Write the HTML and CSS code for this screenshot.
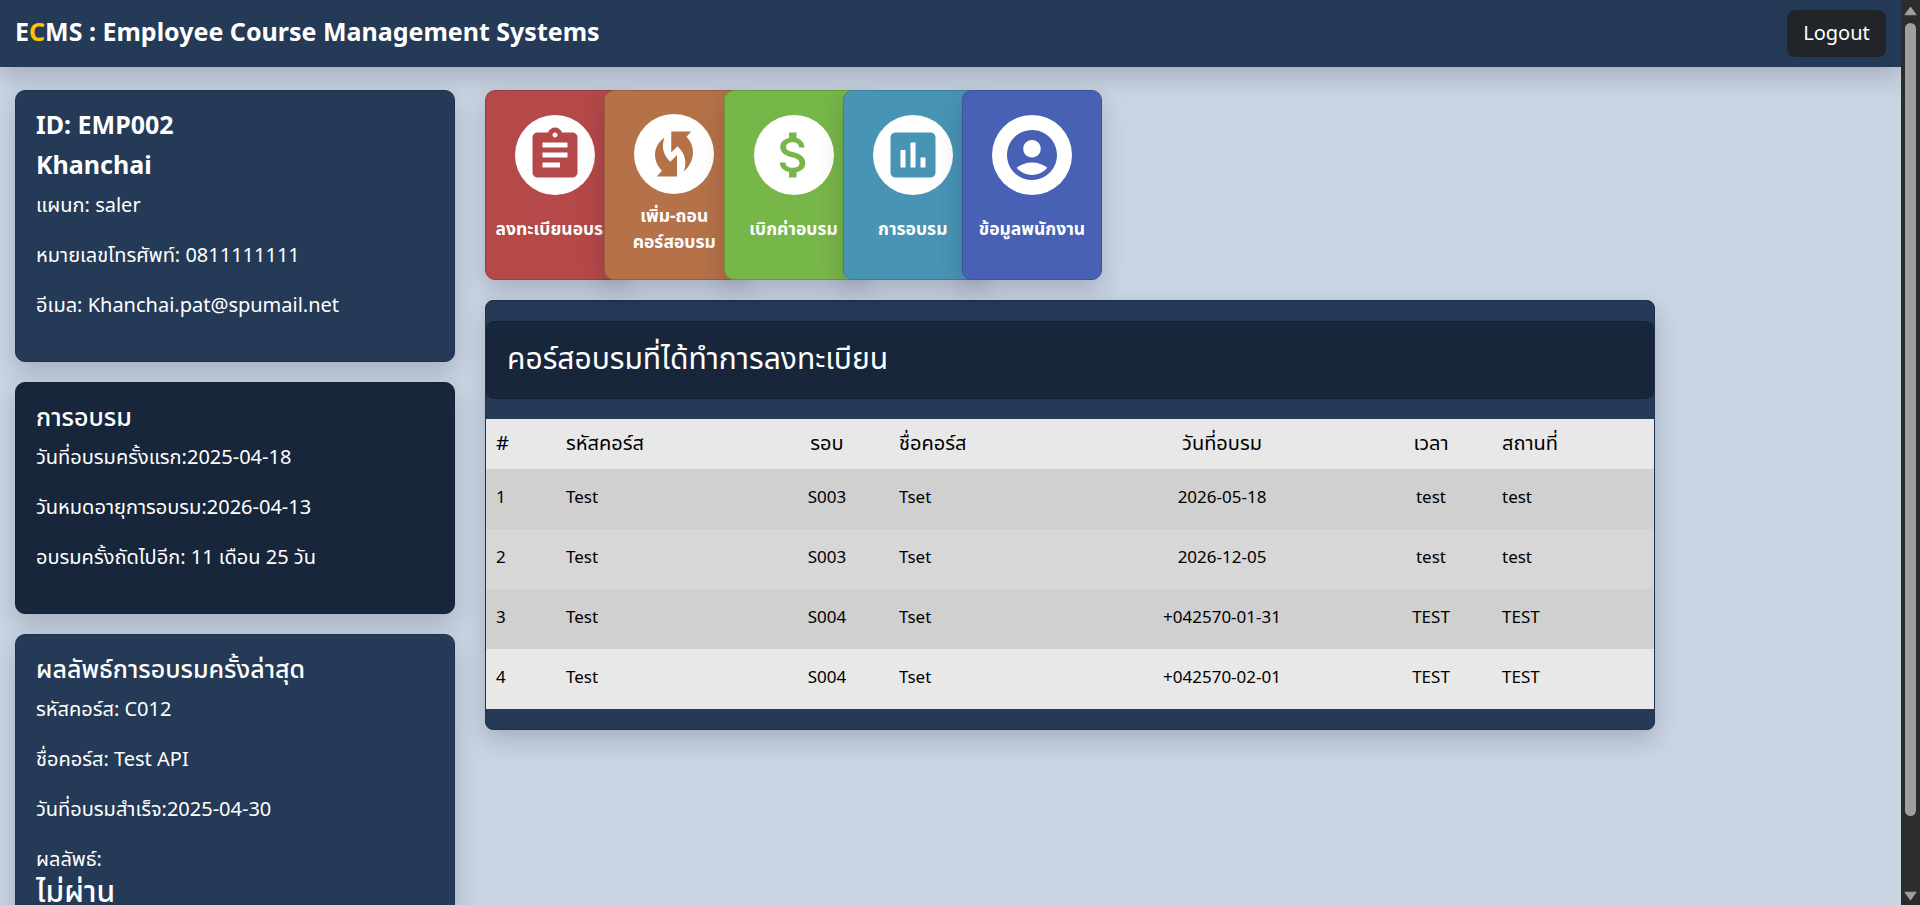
FILE: index.html
```html
<!DOCTYPE html>
<html lang="th">
<head>
<meta charset="utf-8">
<title>ECMS</title>
<link rel="stylesheet" href="styles.css">
</head>
<body>
<div class="page">
  <header class="navbar">
    <div class="brand">E<span class="brand-accent">C</span>MS : Employee Course Management Systems</div>
    <button class="logout">Logout</button>
  </header>
  <main class="content">
    <aside class="sidebar">
      <section class="card">
        <h4>ID: EMP002</h4>
        <h4>Khanchai</h4>
        <p>แผนก: saler</p>
        <p>หมายเลขโทรศัพท์: 0811111111</p>
        <p>อีเมล: Khanchai.pat@spumail.net</p>
      </section>
      <section class="card card-dark">
        <h4 class="medium">การอบรม</h4>
        <p>วันที่อบรมครั้งแรก:2025-04-18</p>
        <p>วันหมดอายุการอบรม:2026-04-13</p>
        <p>อบรมครั้งถัดไปอีก: 11 เดือน 25 วัน</p>
      </section>
      <section class="card">
        <h4 class="medium">ผลลัพธ์การอบรมครั้งล่าสุด</h4>
        <p>รหัสคอร์ส: C012</p>
        <p>ชื่อคอร์ส: Test API</p>
        <p>วันที่อบรมสำเร็จ:2025-04-30</p>
        <p class="result-label">ผลลัพธ์:</p>
        <div class="result">ไม่ผ่าน</div>
      </section>
    </aside>
    <div class="main">
      <nav class="tiles">
        <div class="slot"><a class="tile red"><span class="circle"><svg viewBox="0 0 24 24"><path d="M19 3h-4.180C14.400 1.840 13.300 1 12 1c-1.300 0-2.400.84-2.820 2H5c-1.100 0-2 .9-2 2v14c0 1.100.9 2 2 2h14c1.100 0 2-.9 2-2V5c0-1.100-.9-2-2-2m-7 0c.55 0 1 .45 1 1s-.45 1-1 1-1-.45-1-1 .45-1 1-1m2 14H7v-2h7zm3-4H7v-2h10zm0-4H7V7h10z"/></svg></span><span class="label">ลงทะเบียนอบรม</span></a></div>
        <div class="slot"><a class="tile brown"><span class="circle"><svg viewBox="0 0 24 24"><path d="M10.900 3H18.900L17 5.100C20.600 8.900 20.700 14.800 15.900 19C17.200 15.500 16.700 11.900 13.400 8.900L10.900 11.400ZM13.200 21H5.100L7.200 18.700C3.300 14.600 3.400 8.900 8.200 5.400C6.900 9 7.600 12.300 10.500 15.100L13.200 12.400Z"/></svg></span><span class="label">เพิ่ม-ถอน<br>คอร์สอบรม</span></a></div>
        <div class="slot"><a class="tile green"><span class="circle"><svg viewBox="0 0 24 24"><path d="M11.800 10.900c-2.270-.59-3-1.200-3-2.150 0-1.090 1.010-1.850 2.700-1.850 1.780 0 2.440.85 2.500 2.100h2.210c-.07-1.720-1.120-3.300-3.210-3.810V3h-3v2.160c-1.940.42-3.500 1.680-3.500 3.610 0 2.310 1.910 3.460 4.700 4.130 2.500.6 3 1.480 3 2.410 0 .69-.49 1.790-2.700 1.790-2.060 0-2.870-.92-2.980-2.100h-2.200c.12 2.190 1.760 3.420 3.680 3.830V21h3v-2.150c1.950-.37 3.500-1.500 3.500-3.550 0-2.840-2.430-3.810-4.700-4.400"/></svg></span><span class="label">เบิกค่าอบรม</span></a></div>
        <div class="slot"><a class="tile teal"><span class="circle"><svg viewBox="0 0 24 24"><path d="M19 3H5c-1.100 0-2 .9-2 2v14c0 1.100.9 2 2 2h14c1.100 0 2-.9 2-2V5c0-1.100-.9-2-2-2M9 17H7v-7h2zm4 0h-2V7h2zm4 0h-2v-4h2z"/></svg></span><span class="label">การอบรม</span></a></div>
        <div class="slot"><a class="tile blue"><span class="circle"><svg viewBox="0 0 24 24"><path d="M12 2C6.480 2 2 6.480 2 12s4.480 10 10 10 10-4.480 10-10S17.520 2 12 2m0 4c1.930 0 3.500 1.570 3.500 3.500S13.930 13 12 13s-3.500-1.570-3.500-3.500S10.070 6 12 6m0 14c-2.030 0-4.430-.82-6.140-2.880C7.550 15.800 9.680 15 12 15s4.450.8 6.140 2.120C16.430 19.180 14.030 20 12 20"/></svg></span><span class="label">ข้อมูลพนักงาน</span></a></div>
      </nav>
      <section class="courses">
        <h3>คอร์สอบรมที่ได้ทำการลงทะเบียน</h3>
        <table>
          <colgroup><col class="c-no"><col class="c-code"><col class="c-round"><col class="c-name"><col class="c-date"><col class="c-time"><col></colgroup>
          <thead><tr><th>#</th><th>รหัสคอร์ส</th><th class="mid">รอบ</th><th>ชื่อคอร์ส</th><th class="mid">วันที่อบรม</th><th class="mid">เวลา</th><th>สถานที่</th></tr></thead>
          <tbody>
            <tr class="odd"><td>1</td><td>Test</td><td class="mid">S003</td><td>Tset</td><td class="mid">2026-05-18</td><td class="mid">test</td><td>test</td></tr>
            <tr class="hover"><td>2</td><td>Test</td><td class="mid">S003</td><td>Tset</td><td class="mid">2026-12-05</td><td class="mid">test</td><td>test</td></tr>
            <tr class="odd"><td>3</td><td>Test</td><td class="mid">S004</td><td>Tset</td><td class="mid">+042570-01-31</td><td class="mid">TEST</td><td>TEST</td></tr>
            <tr><td>4</td><td>Test</td><td class="mid">S004</td><td>Tset</td><td class="mid">+042570-02-01</td><td class="mid">TEST</td><td>TEST</td></tr>
          </tbody>
        </table>
      </section>
    </div>
  </main>
</div>
<div class="scrollbar">
  <svg class="arrow" viewBox="0 0 12 9"><path d="M6 1 11 8H1Z"/></svg>
  <div class="thumb"></div>
  <svg class="arrow arrow-down" viewBox="0 0 12 9"><path d="M6 8 11 1H1Z"/></svg>
</div>
</body>
</html>
```
FILE: styles.css
```css
* { box-sizing: border-box; }
:root { --shadow: 0 10px 25px rgba(30, 20, 50, .2); }
body {
  margin: 0;
  height: 905px;
  display: flex;
  overflow: hidden;
  font-family: "Noto Sans", "Noto Sans Thai", sans-serif;
  font-size: 20px;
  line-height: 30px;
  color: #fff;
  background: #c9d5e3;
}
.page { flex: 1; min-width: 0; height: 905px; overflow: hidden; }
.navbar {
  height: 67px;
  padding: 0 15px;
  display: flex;
  align-items: center;
  justify-content: space-between;
  background: #243a56;
  box-shadow: var(--shadow);
}
.brand { font-size: 25px; font-weight: 700; padding-bottom: 6px; }
.brand-accent { color: #ffc107; }
.logout {
  width: 99px;
  height: 47px;
  padding: 0 0 2px;
  border: 0;
  border-radius: 8px;
  background: #212529;
  color: #fff;
  font: inherit;
}
.content { display: flex; gap: 30px; padding: 23px 15px 0; }
.sidebar { width: 440px; display: flex; flex-direction: column; gap: 20px; }
.card {
  padding: 13px 20px 21px;
  border: 1px solid #1f324b;
  border-radius: 10px;
  background: #243a56;
  box-shadow: var(--shadow);
}
.card-dark { background: #18263b; border-color: #152033; }
h4 { margin: 0; font-size: 25px; line-height: 40px; font-weight: 700; }
h4.medium { font-weight: 500; }
p { margin: 0 0 20px; }
h4 + p { margin-top: 6px; }
p.result-label { margin-bottom: 0; }
.result { font-size: 30px; font-weight: 500; line-height: 34px; padding-bottom: 40px; white-space: nowrap; }
.main { width: 1170px; display: flex; flex-direction: column; gap: 20px; }
.tiles { display: flex; }
.slot { width: 119.250px; }
.tile {
  position: relative;
  width: 140px;
  height: 190px;
  display: flex;
  flex-direction: column;
  align-items: center;
  padding-top: 24px;
  border: 1px solid;
  border-radius: 10px;
  box-shadow: var(--shadow);
}
.circle {
  width: 80px;
  height: 80px;
  display: grid;
  place-items: center;
  border-radius: 50%;
  background: #fff;
}
.circle svg { width: 60px; height: 60px; fill: currentColor; }
.label {
  flex: 1;
  display: flex;
  align-items: center;
  padding-bottom: 18px;
  font-size: 17.500px;
  line-height: 26px;
  font-weight: 700;
  text-align: center;
  white-space: nowrap;
  color: #fff;
}
.red { background: #b54848; color: #b54848; border-color: #9c3d3f; }
.brown { background: #b57248; color: #b57248; border-color: #99603d; padding-top: 23px; }
.green { background: #77b648; color: #77b648; border-color: #659b3d; }
.teal { background: #4894b5; color: #4894b5; border-color: #3d7e9a; }
.blue { background: #4861b5; color: #4861b5; border-color: #3d529a; }
.courses {
  height: 430px;
  padding-top: 20px;
  border: 1px solid #1f324b;
  border-radius: 8px;
  background: #243a56;
  box-shadow: var(--shadow);
}
h3 {
  margin: 0 0 20px;
  height: 78px;
  padding: 0 20px;
  border: 1px solid #152033;
  border-radius: 8px;
  background: #18263b;
  font-size: 30px;
  font-weight: 400;
  line-height: 72px;
}
table {
  width: 100%;
  table-layout: fixed;
  border-collapse: collapse;
  color: #000;
  background: #e8e8e8;
}
.c-no { width: 70px; }
.c-code { width: 209px; }
.c-round { width: 124px; }
.c-name { width: 185px; }
.c-date { width: 296px; }
.c-time { width: 122px; }
th { height: 50px; padding: 0 10px 3px; font-weight: 400; text-align: left; }
td { height: 60px; padding: 0 10px 4px; font-size: 17px; }
.mid { text-align: center; }
.odd { background: #d0d0d0; }
.hover { background: #d7d7d7; }
.scrollbar {
  width: 19px;
  display: flex;
  flex-direction: column;
  align-items: center;
  padding: 6px 0 4px;
  background: #2c2c2c;
}
.arrow { width: 13px; height: 10px; fill: #9f9f9f; stroke: #9f9f9f; stroke-linejoin: round; }
.thumb { width: 11px; height: 793px; margin-top: 7px; border-radius: 6px; background: #9f9f9f; }
.arrow-down { margin-top: auto; }
```
